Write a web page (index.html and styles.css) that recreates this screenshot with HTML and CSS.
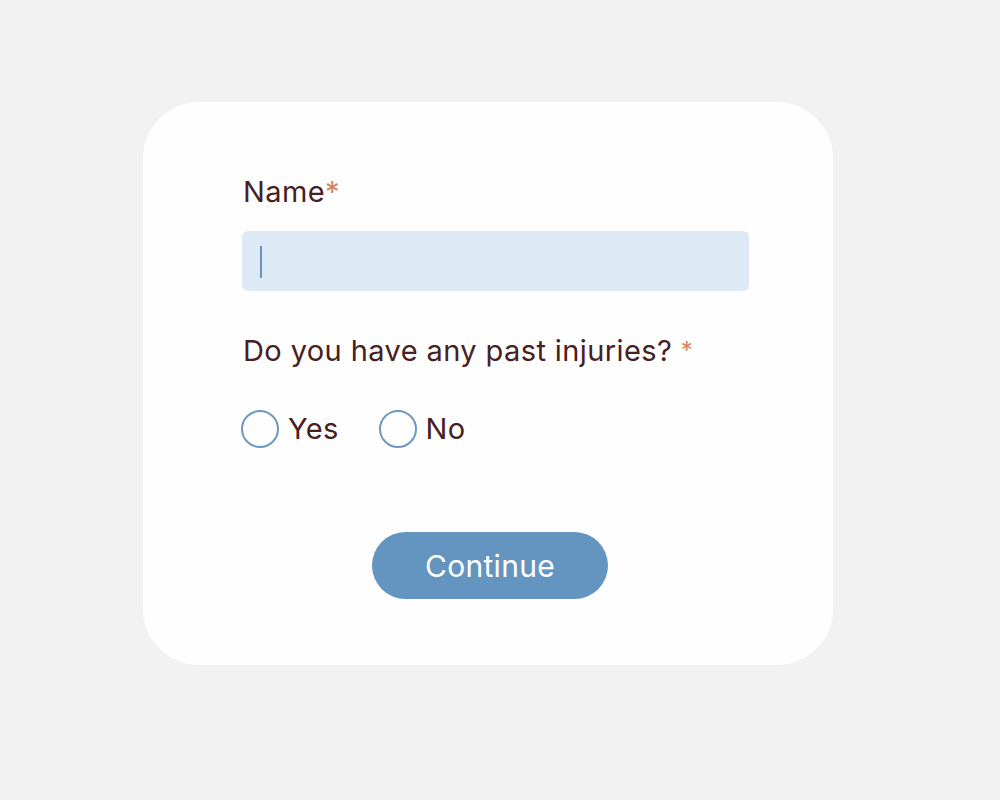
FILE: index.html
```html
<!DOCTYPE html>
<html lang="en">

<head>
  <meta charset="UTF-8">
  <meta name="viewport" content="width=device-width, initial-scale=1.0">
  <title>Intake Form</title>
  <link rel="stylesheet" href="styles.css">
</head>

<body>
  <div class="card">
    <form class="intake-form">
      <div class="form-group">
        <label for="name">Name<span class="required">*</span></label>
        <div class="input-wrap">
          <input type="text" id="name" name="name">
          <span class="caret"></span>
        </div>
      </div>

      <div class="form-group question">
        <div class="question-label">Do you have any past injuries? <span class="required">*</span></div>
        <div class="radio-row">
          <label class="radio">
            <input type="radio" name="injuries" value="yes">
            <span class="circle"></span>
            Yes
          </label>
          <label class="radio">
            <input type="radio" name="injuries" value="no">
            <span class="circle"></span>
            No
          </label>
        </div>
      </div>

      <div class="actions">
        <button type="button">Continue</button>
      </div>
    </form>
  </div>
</body>

</html>
```

FILE: styles.css
```css
body {
  font-family: Inter, "Noto Sans", sans-serif;
  background-color: #f1f1f2;
  margin: 0;
  padding: 102px 0 0 143px;
}

.card {
  width: 690px;
  height: 563px;
  box-sizing: border-box;
  background-color: #fefefe;
  border-radius: 56px;
  padding: 72px 84px 0 100px;
}

.form-group label,
.question-label {
  display: block;
  font-size: 29px;
  line-height: 36px;
  letter-spacing: 0.4px;
  color: #47201f;
}

.required {
  color: #d8845e;
}

.question-label .required {
  font-size: 24px;
  vertical-align: 2px;
}

.input-wrap {
  position: relative;
  margin-top: 21px;
  margin-left: -1px;
}

.input-wrap input {
  display: block;
  width: 100%;
  height: 60px;
  box-sizing: border-box;
  border: none;
  border-radius: 6px;
  background-color: #dde9f4;
  outline: none;
  padding: 0 18px;
  font-size: 24px;
  font-family: inherit;
}

/* fake blinking caret */
.caret {
  position: absolute;
  left: 18px;
  top: 15px;
  width: 2px;
  height: 32px;
  background-color: #6e92b8;
}

.question {
  margin-top: 42px;
}

.radio-row {
  display: flex;
  gap: 40px;
  margin-top: 41px;
  margin-left: -2px;
}

.radio-row label.radio {
  display: flex;
  align-items: center;
  gap: 9px;
  height: 38px;
  font-size: 29px;
  letter-spacing: 0.3px;
  color: #47201f;
  cursor: pointer;
}

.radio input {
  display: none;
}

.circle {
  width: 34px;
  height: 34px;
  border: 2px solid #6c98c2;
  border-radius: 50%;
}

.actions {
  display: flex;
  justify-content: center;
  margin-top: 84px;
  padding-right: 12px;
}

button {
  width: 236px;
  height: 67px;
  border: none;
  border-radius: 34px;
  background-color: #6495c0;
  color: #fff;
  font-family: inherit;
  font-size: 30px;
  letter-spacing: 0.3px;
  cursor: pointer;
}
```
